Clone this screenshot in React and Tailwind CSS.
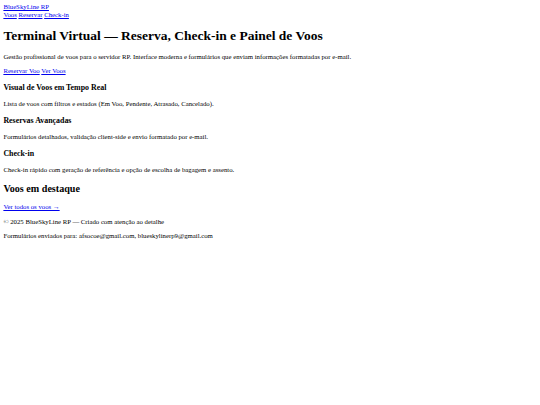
import React from "react";

const A = ({ children }) => (
  <a href="#" className="text-[#0000ee] underline">
    {children}
  </a>
);

export default function App() {
  return (
    <div className="min-h-[405px] bg-white p-[3.375px] font-['Liberation_Serif',serif] text-[6.75px] leading-[7.9px] text-black">
      <header>
        <div>
          <A>BlueSkyLine RP</A>
        </div>
        <nav>
          <A>Voos</A> <A>Reservar</A> <A>Check-in</A>
        </nav>
      </header>
      <main>
        <section>
          <h1 className="my-[9.04px] text-[13.5px] leading-[15.53px] font-bold">
            Terminal Virtual — Reserva, Check-in e Painel de Voos
          </h1>
          <p className="my-[6.75px]">
            Gestão profissional de voos para o servidor RP. Interface moderna e formulários que enviam informações formatadas por e-mail.
          </p>
          <p className="my-[6.75px]">
            <A>Reservar Voo</A> <A>Ver Voos</A>
          </p>
        </section>
        <section>
          <div>
            <h3 className="my-[7.9px] text-[7.9px] leading-[9.3px] font-bold">Visual de Voos em Tempo Real</h3>
            <p className="my-[6.75px]">Lista de voos com filtros e estados (Em Voo, Pendente, Atrasado, Cancelado).</p>
          </div>
          <div>
            <h3 className="my-[7.9px] text-[7.9px] leading-[9.3px] font-bold">Reservas Avançadas</h3>
            <p className="my-[6.75px]">Formulários detalhados, validação client-side e envio formatado por e-mail.</p>
          </div>
          <div>
            <h3 className="my-[7.9px] text-[7.9px] leading-[9.3px] font-bold">Check-in</h3>
            <p className="my-[6.75px]">Check-in rápido com geração de referência e opção de escolha de bagagem e assento.</p>
          </div>
        </section>
        <section>
          <h2 className="my-[8.4px] text-[10.125px] leading-[11.8px] font-bold">Voos em destaque</h2>
          <p className="my-[6.75px]">
            <A>Ver todos os voos →</A>
          </p>
        </section>
      </main>
      <footer>
        <p className="my-[6.75px]">© 2025 BlueSkyLine RP — Criado com atenção ao detalhe</p>
        <p className="my-[6.75px]">Formulários enviados para: afsocoe@gmail.com, blueskylinerp9@gmail.com</p>
      </footer>
    </div>
  );
}
